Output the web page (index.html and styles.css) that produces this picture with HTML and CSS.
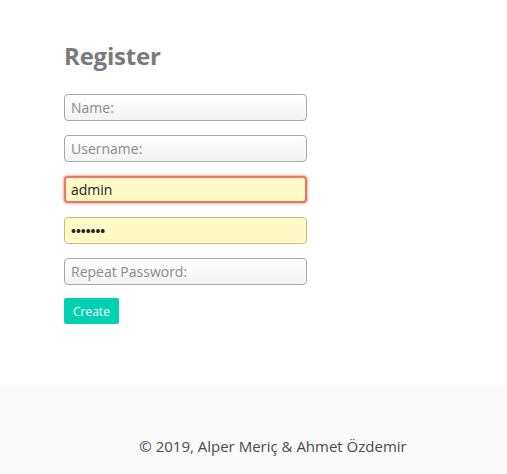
FILE: index.html
```html
<!DOCTYPE html>
<html>
<head>
<meta charset="utf-8">
<link rel="stylesheet" href="styles.css">
</head>
<body>
<main class="content">
  <h1 class="title">Register</h1>
  <form class="form">
    <input class="field" type="text" placeholder="Name:">
    <input class="field" type="text" placeholder="Username:">
    <input class="field field-auto field-error" type="text" value="admin">
    <input class="field field-auto" type="password" value="1234567">
    <input class="field" type="password" placeholder="Repeat Password:">
    <button class="btn" type="button">Create</button>
  </form>
</main>
<footer class="footer">
  <p class="footer-text">© 2019, Alper Meriç &amp; Ahmet Özdemir</p>
</footer>
</body>
</html>
```
FILE: styles.css
```css
html, body {
  margin: 0;
  padding: 0;
  background: #fff;
  font-family: "Open Sans", "Noto Sans", sans-serif;
}
.content {
  padding: 40px 0 0 64px;
  height: 345px;
  box-sizing: border-box;
}
.title {
  margin: 0 0 22px;
  font-size: 24px;
  line-height: 32px;
  font-weight: 700;
  color: #7a7a7a;
  letter-spacing: -0.2px;
}
.form {
  display: flex;
  flex-direction: column;
  align-items: flex-start;
  gap: 14px;
}
.field {
  width: 243px;
  height: 27px;
  box-sizing: border-box;
  margin: 0;
  padding: 0 6px;
  border: 1px solid #a8a8a8;
  border-radius: 4px;
  background: linear-gradient(#ffffff, #f3f3f3);
  font-family: inherit;
  font-size: 14px;
  color: #222;
  outline: none;
}
.field::placeholder {
  color: #8a8a8a;
}
.field-auto {
  background: #fff9c6;
  border-color: #c9b98a;
}
.field-error {
  border: 2px solid #e8786a;
  box-shadow: 0 0 2px 1px rgba(240, 120, 100, 0.6);
  padding-left: 5px;
}
.field[type="password"].field-auto {
  font-size: 13px;
  font-weight: 700;
}
.btn {
  margin-top: -1px;
  height: 26px;
  padding: 0 9px;
  border: none;
  border-radius: 2px;
  background: #00d1b2;
  color: #fff;
  font-family: inherit;
  font-size: 12px;
}
.footer {
  background: #fafafa;
  height: 89px;
  margin-top: 40px;
  display: flex;
  justify-content: center;
  padding-left: 39px;
}
.footer-text {
  margin: 51px 0 0;
  font-size: 15px;
  color: #4a4a4a;
}
```
